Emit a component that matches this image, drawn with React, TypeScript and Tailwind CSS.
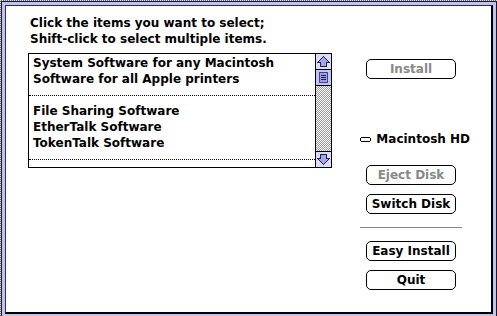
import React from "react";

const F = "font-['DejaVu_Sans',sans-serif] font-bold text-[12px] leading-[16px]";

function ArrowUp() {
  return (
    <svg width="15" height="15" viewBox="0 0 15 15" shapeRendering="crispEdges">
      <path
        d="M7.5 2.5 L13.5 8.5 L10.5 8.5 L10.5 12.5 L4.5 12.5 L4.5 8.5 L1.5 8.5 Z"
        fill="#a4a4f0"
        stroke="#222244"
        strokeWidth="1"
      />
    </svg>
  );
}

function ArrowDown() {
  return (
    <svg width="15" height="15" viewBox="0 0 15 15" shapeRendering="crispEdges">
      <path
        d="M7.5 12.5 L13.5 6.5 L10.5 6.5 L10.5 2.5 L4.5 2.5 L4.5 6.5 L1.5 6.5 Z"
        fill="#a4a4f0"
        stroke="#222244"
        strokeWidth="1"
      />
    </svg>
  );
}

function Thumb() {
  return (
    <svg width="15" height="15" viewBox="0 0 15 15" shapeRendering="crispEdges">
      <rect x="0" y="0" width="15" height="15" fill="#c4c4f4" />
      <rect x="3.5" y="2.5" width="8" height="10" fill="#9c9ce8" stroke="#444488" />
      <line x1="5" y1="5.5" x2="10" y2="5.5" stroke="#222255" />
      <line x1="5" y1="7.5" x2="10" y2="7.5" stroke="#222255" />
      <line x1="5" y1="9.5" x2="10" y2="9.5" stroke="#222255" />
    </svg>
  );
}

function DiskIcon() {
  return (
    <svg width="12" height="5" viewBox="0 0 12 5" shapeRendering="crispEdges" className="mr-[5px]">
      <rect x="1" y="0" width="10" height="1" fill="#000" />
      <rect x="1" y="4" width="10" height="1" fill="#000" />
      <rect x="0" y="1" width="1" height="3" fill="#000" />
      <rect x="11" y="1" width="1" height="3" fill="#000" />
    </svg>
  );
}

function Btn({ label, disabled }: { label: string; disabled?: boolean }) {
  return (
    <div
      className={
        disabled
          ? "ml-[6px] flex h-[20px] w-[90px] items-center justify-center rounded-[5px] border border-black text-[#888888]"
          : "ml-[6px] flex h-[20px] w-[90px] items-center justify-center rounded-[5px] border border-black text-black"
      }
    >
      {label}
    </div>
  );
}

function Row({ text }: { text: string }) {
  return <div className="h-[16px] pl-[4px] whitespace-nowrap">{text}</div>;
}

function Sep() {
  return (
    <div className="h-[16px] pt-[8px]">
      <div className="border-t border-dotted border-black" />
    </div>
  );
}

export default function App() {
  return (
    <div
      className={`relative h-[316px] w-[497px] overflow-hidden bg-[repeating-conic-gradient(#6e6e6e_0_25%,#dcdcdc_0_50%)] bg-[length:2px_2px] text-black ${F}`}
    >
      <div className="ml-px mt-px h-[317px] w-[496px] border border-[#1a1a33] bg-[#c2c2ea] p-[3px]">
        <div className="flex h-full w-full border-t border-l border-r-2 border-b-2 border-t-[#2a2a55] border-l-[#2a2a55] border-r-black border-b-black bg-white">
          <div className="ml-[22px] flex w-[304px] flex-col">
            <div className="pl-[2px] pt-[9px] whitespace-nowrap">
              <div>Click the items you want to select;</div>
              <div>Shift-click to select multiple items.</div>
            </div>
            <div className="mt-[6px] flex h-[115px] border border-black">
              <div className="flex-1 pt-[1px]">
                <Row text="System Software for any Macintosh" />
                <Row text="Software for all Apple printers" />
                <Sep />
                <Row text="File Sharing Software" />
                <Row text="EtherTalk Software" />
                <Row text="TokenTalk Software" />
                <Sep />
              </div>
              <div className="flex w-[16px] flex-col border-l border-black">
                <div className="h-[15px] bg-[#dcdcfa]">
                  <ArrowUp />
                </div>
                <div className="h-[17px] border-t border-b border-black">
                  <Thumb />
                </div>
                <div className="flex-1 bg-[repeating-conic-gradient(#9a9a9a_0_25%,#ffffff_0_50%)] bg-[length:2px_2px]" />
                <div className="h-[16px] border-t border-black bg-[#dcdcfa]">
                  <ArrowDown />
                </div>
              </div>
            </div>
          </div>
          <div className="ml-[28px] flex w-[110px] flex-col pt-[53px]">
            <Btn label="Install" disabled />
            <div className="mt-[52px] flex h-[16px] items-center whitespace-nowrap">
              <DiskIcon />
              <span>Macintosh HD</span>
            </div>
            <div className="mt-[18px]">
              <Btn label="Eject Disk" disabled />
            </div>
            <div className="mt-[9px]">
              <Btn label="Switch Disk" />
            </div>
            <div className="mt-[13px] h-px w-[102px] bg-[#888888]" />
            <div className="mt-[13px]">
              <Btn label="Easy Install" />
            </div>
            <div className="mt-[9px]">
              <Btn label="Quit" />
            </div>
          </div>
        </div>
      </div>
    </div>
  );
}
